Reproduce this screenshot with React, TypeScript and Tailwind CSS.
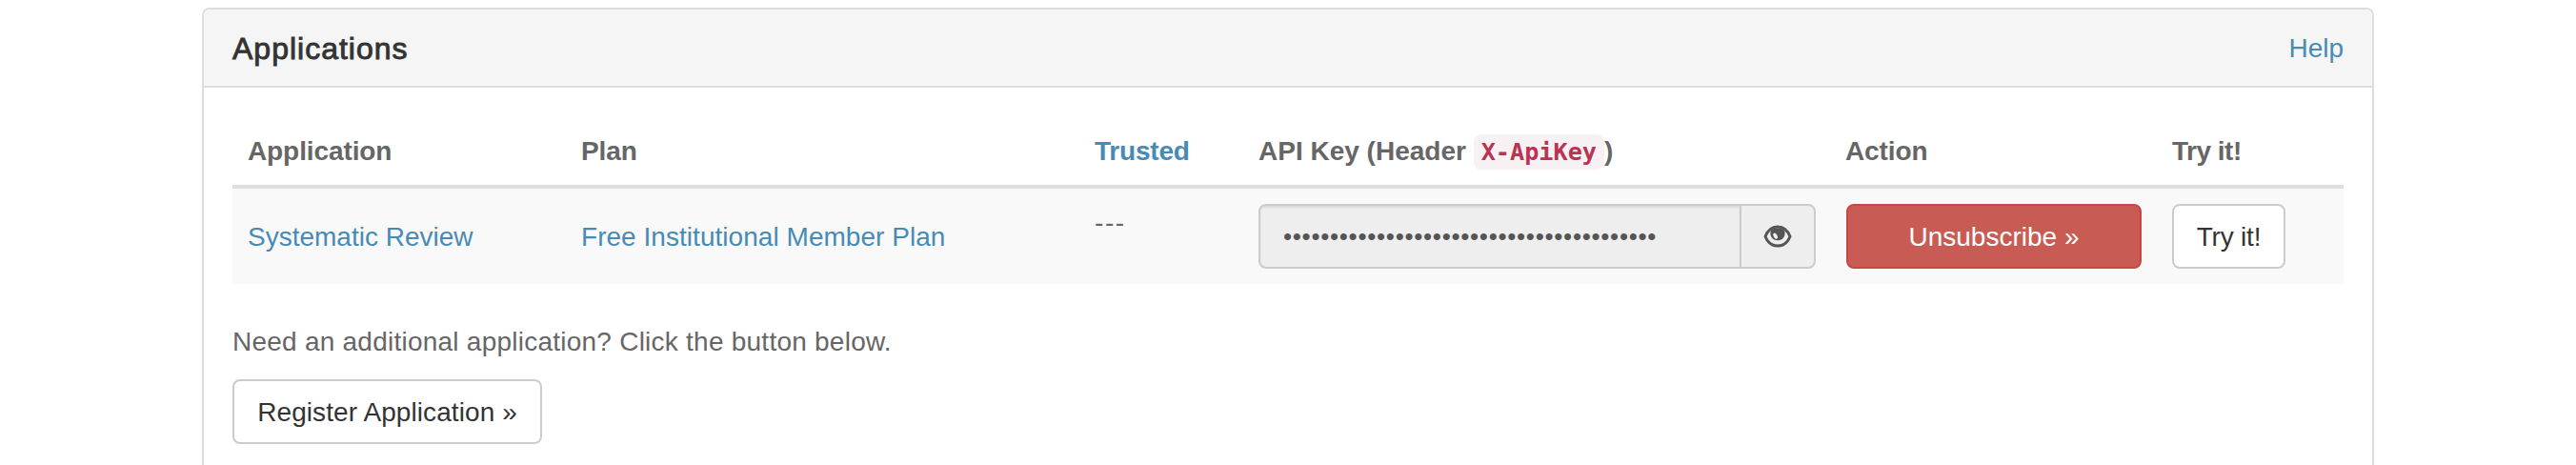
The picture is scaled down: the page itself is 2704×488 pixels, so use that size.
import React from "react";

const KEY_MASK = "•".repeat(40);

function EyeIcon() {
  return (
    <svg width="30" height="24" viewBox="0 0 30 24" fill="none" aria-hidden="true">
      <path
        d="M2 12.2C4.600 5.600 9.400 2 15 2s10.400 3.600 13 10.200C25.400 18.600 20.600 22 15 22S4.600 18.600 2 12.200Z"
        stroke="#555"
        strokeWidth="3"
        strokeLinejoin="round"
      />
      <path d="M8.300 5.200C5.900 9.600 8.300 16.200 15 16.200s9.100-6.600 6.700-11C18 2.800 12 2.800 8.300 5.200Z" fill="#555" />
      <ellipse cx="12.600" cy="11.700" rx="1.900" ry="3.300" transform="rotate(-28 12.600 11.700)" fill="#eee" />
    </svg>
  );
}

function Header({ className = "tracking-[-0.1px]", children }: { className?: string; children: React.ReactNode }) {
  return <div className={"h-14 px-4 pt-px font-bold whitespace-nowrap " + className}>{children}</div>;
}

const COLUMNS = "grid grid-cols-[350px_539px_172px_617px_342px_196px]";

export default function App() {
  return (
    <div className="h-[488px] overflow-hidden bg-white pt-2 font-['Liberation_Sans',Arial,sans-serif] text-[28px] leading-10 text-[#666]">
      <section className="ml-[212px] h-[560px] w-[2280px] rounded-lg border-2 border-[#ddd]">
        <header className="flex h-[82px] items-center justify-between rounded-t-md border-b-2 border-[#ddd] bg-[#f5f5f5] px-[30px]">
          <h3 className="pt-px text-[32px] leading-10 tracking-[1px] text-[#333] [-webkit-text-stroke:0.9px_#333]">Applications</h3>
          <a className="pt-0.5 text-[#478bb5]">Help</a>
        </header>

        <div className="px-[30px] pt-[46px]">
          <div className={COLUMNS + " h-[60px] border-b-4 border-[#ddd]"}>
            <Header>Application</Header>
            <Header>Plan</Header>
            <Header className="text-[#478bb5] tracking-[-0.2px]">Trusted</Header>
            <Header className="tracking-normal">
              API Key (Header{" "}
              <code className="rounded-lg bg-[#f8f1f3] px-2 py-1 font-['DejaVu_Sans_Mono',monospace] text-[25.2px] leading-none tracking-normal text-[#bb3352]">X-ApiKey</code>)
            </Header>
            <Header className="-ml-px tracking-[-0.1px]">Action</Header>
            <Header className="tracking-[-0.5px]">Try it!</Header>
          </div>

          <div className={COLUMNS + " h-[100px] bg-[#f9f9f9] py-4"}>
            <a className="self-center px-4 pt-0.5 text-[#478bb5]">Systematic Review</a>
            <a className="self-center px-4 pt-0.5 tracking-[0.04px] text-[#478bb5]">Free Institutional Member Plan</a>
            <span className="px-4 tracking-[1.6px]">---</span>
            <div className="px-4">
              <div className="flex h-[68px] w-[585px] overflow-hidden rounded-lg border-2 border-[#ccc] bg-[#eee] text-[#555]">
                <div className="flex w-[505px] items-center border-r-2 border-[#ccc] pl-6 text-[26px] tracking-[0.7px] shadow-[inset_0_2px_2px_rgba(0,0,0,0.075)]">
                  {KEY_MASK}
                </div>
                <button className="flex flex-1 items-center justify-center">
                  <EyeIcon />
                </button>
              </div>
            </div>
            <div className="px-4">
              <button className="h-[68px] w-[310px] rounded-lg border-2 border-[#c64840] bg-[#c85c54] pt-0.5 text-white">Unsubscribe »</button>
            </div>
            <div className="px-4">
              <button className="h-[68px] w-[119px] rounded-lg border-2 border-[#ccc] bg-white pt-0.5 tracking-[-0.2px] text-[#333]">Try it!</button>
            </div>
          </div>

          <p className="mt-[41px] mb-[19px] tracking-[0.24px]">Need an additional application? Click the button below.</p>
          <button className="h-[68px] w-[325px] rounded-lg border-2 border-[#ccc] bg-white pt-0.5 tracking-[0.08px] text-[#333]">Register Application »</button>
        </div>
      </section>
    </div>
  );
}
